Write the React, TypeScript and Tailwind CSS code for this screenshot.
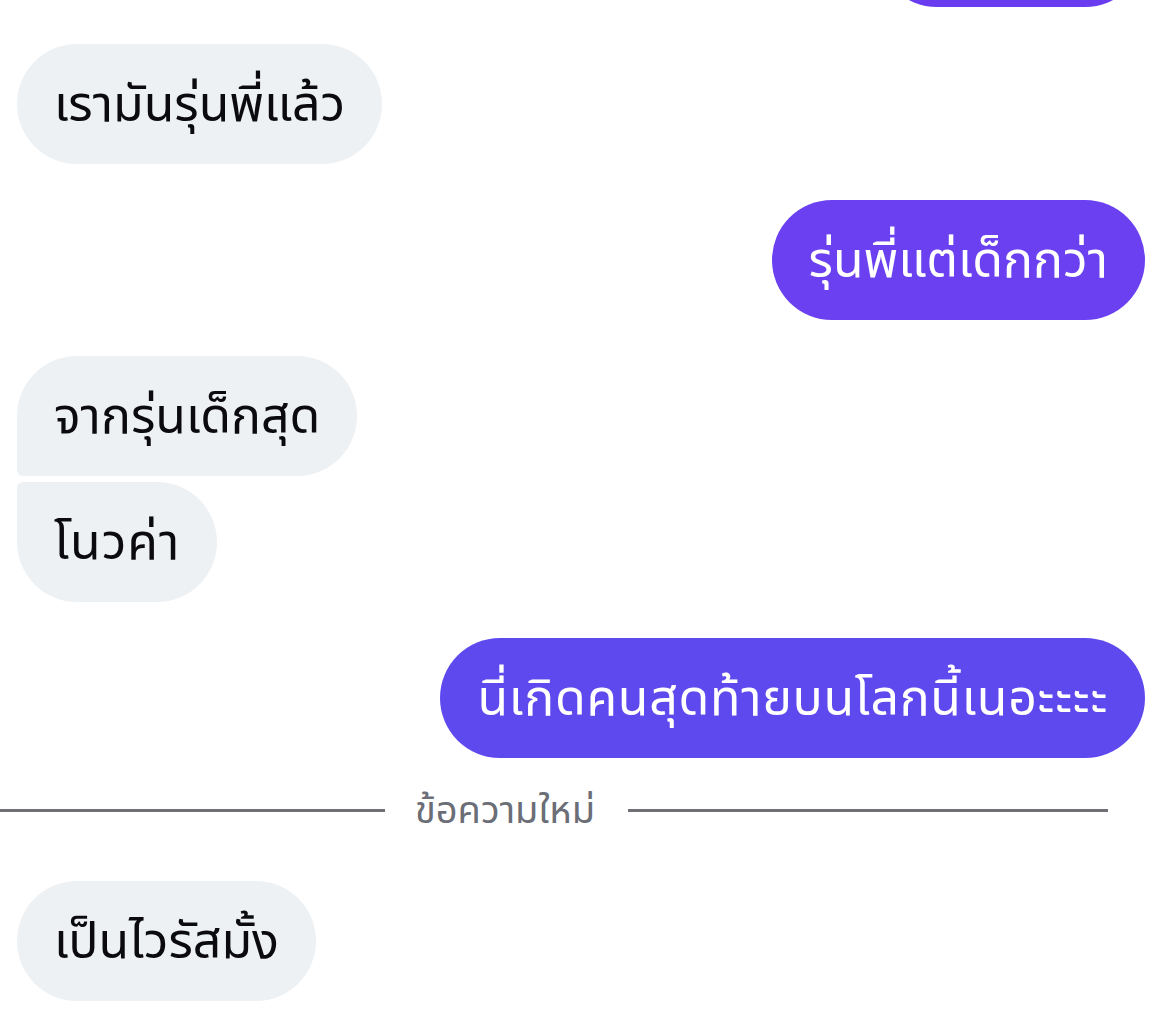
const font = { fontFamily: '"Noto Sans Thai", "Noto Sans", "DejaVu Sans", sans-serif' };

type Msg = {
  text: string;
  mine: boolean;
  bg?: string;
  corner?: string;
  extra?: string;
};

function Bubble({ text, mine, bg, corner, extra }: Msg) {
  return (
    <div className={mine ? "flex justify-end pr-[24px]" : "flex justify-start pl-[17px]"}>
      <div
        className={`h-[120px] flex items-center px-[37px] pt-[4px] text-[50px] leading-none whitespace-nowrap ${
          mine ? `${bg} text-white` : "bg-[#eef1f4] text-[#0b0b0f]"
        } ${corner ?? "rounded-full"} ${extra ?? ""}`}
      >
        {text}
      </div>
    </div>
  );
}

export default function App() {
  return (
    <div className="w-[1169px] h-[1023px] bg-white overflow-hidden" style={font}>
      <div className="flex justify-end pr-[24px] -mt-[113px]">
        <div className="w-[268px] h-[120px] bg-[#6a3cf0] rounded-full" />
      </div>

      <div className="mt-[37px]">
        <Bubble text="เรามันรุ่นพี่แล้ว" mine={false} />
      </div>
      <div className="mt-[36px]">
        <Bubble text="รุ่นพี่แต่เด็กกว่า" mine bg="bg-[#6a40f0]" />
      </div>
      <div className="mt-[36px]">
        <Bubble
          text="จากรุ่นเด็กสุด"
          mine={false}
          corner="rounded-l-[60px] rounded-r-[60px] rounded-bl-[6px]"
        />
      </div>
      <div className="mt-[6px]">
        <Bubble
          text="โนวค่า"
          mine={false}
          corner="rounded-l-[60px] rounded-r-[60px] rounded-tl-[6px]"
          extra="tracking-[1px]"
        />
      </div>
      <div className="mt-[36px]">
        <Bubble
          text="นี่เกิดคนสุดท้ายบนโลกนี้เนอะะะะ"
          mine
          bg="bg-[#5e49ef]"
          extra="tracking-[0.7px]"
        />
      </div>

      <div className="flex items-center mt-[28px] h-[48px] pr-[61px]">
        <div className="w-[385px] h-[3px] bg-[#6f7177]" />
        <div className="pl-[30px] pr-[33px] pt-[2px] text-[38px] text-[#6b6e76] whitespace-nowrap">
          ข้อความใหม่
        </div>
        <div className="flex-1 h-[3px] bg-[#6f7177]" />
      </div>

      <div className="mt-[47px]">
        <Bubble text="เป็นไวรัสมั้ง" mine={false} />
      </div>
    </div>
  );
}
